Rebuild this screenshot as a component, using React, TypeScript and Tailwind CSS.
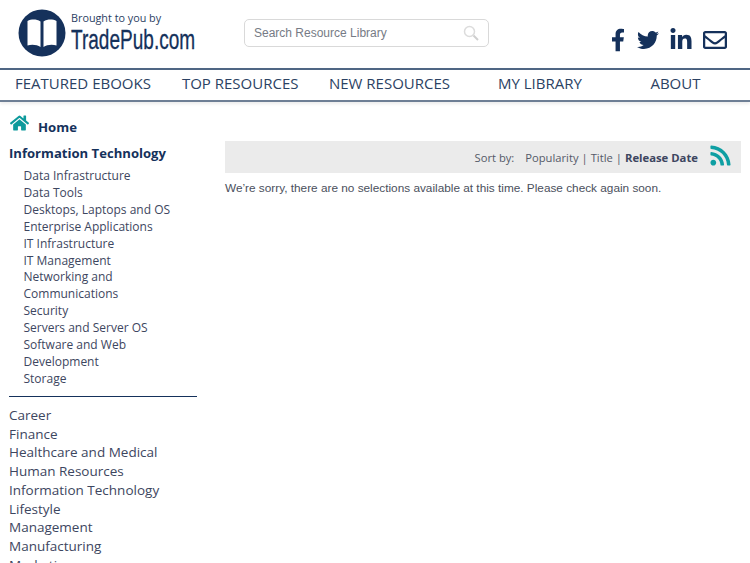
import React from 'react';
import { FaFacebookF, FaTwitter, FaLinkedinIn, FaRegEnvelope, FaHome, FaRss } from 'react-icons/fa';

const subCategories = [
  'Data Infrastructure',
  'Data Tools',
  'Desktops, Laptops and OS',
  'Enterprise Applications',
  'IT Infrastructure',
  'IT Management',
  'Networking and Communications',
  'Security',
  'Servers and Server OS',
  'Software and Web Development',
  'Storage',
];

const categories = [
  'Career',
  'Finance',
  'Healthcare and Medical',
  'Human Resources',
  'Information Technology',
  'Lifestyle',
  'Management',
  'Manufacturing',
  'Marketing',
];

const Logo: React.FC = () => (
  <svg viewBox="0 0 48 48" className="w-[48px] h-[48px] shrink-0">
    <circle cx="24" cy="24" r="23.5" fill="#15315b" />
    <path d="M9.500 12c4-2 9-2 13 .5V38c-3.500-2.500-9-3-13-1.500z" fill="#fff" />
    <path d="M38.500 12c-4-2-9-2-13 .5V38c3.500-2.500 9-3 13-1.500z" fill="#fff" />
  </svg>
);

const App: React.FC = () => {
  return (
    <div className="h-[563px] overflow-hidden bg-white font-['Open_Sans',sans-serif] text-[#3d4660]">
      <header className="h-[68px] flex items-start">
        <div className="ml-[18px] mt-[9px] flex items-center gap-[5px]">
          <Logo />
          <div className="w-[124px] text-[#15315b] mt-[2px]">
            <div className="text-[10.800px] leading-[14px] mt-[-2px] text-[#2c3e63] whitespace-nowrap">Brought to you by</div>
            <div className="font-['Liberation_Sans',sans-serif] text-[28px] leading-[30px] whitespace-nowrap origin-left scale-x-[0.68] [-webkit-text-stroke:0.3px_#15315b]">TradePub.com</div>
          </div>
        </div>
        <div className="ml-[49px] mt-[19px] w-[245px] h-[28px] rounded-[5px] border border-[#d9d9d9] flex items-center justify-between pl-[9px] pr-[9px]">
          <span className="font-['Liberation_Sans',sans-serif] text-[12px] text-[#767b85]">Search Resource Library</span>
          <svg viewBox="0 0 16 16" className="w-[16px] h-[16px]" fill="none">
            <circle cx="6.500" cy="6.500" r="5" stroke="#dcdcdc" strokeWidth="1.500" />
            <path d="M10.500 10.500l4.500 4.500" stroke="#cfcfcf" strokeWidth="2" />
          </svg>
        </div>
        <div className="ml-auto mr-[23px] mt-[28px] flex items-center text-[#15315b]">
          <FaFacebookF className="w-[14px] h-[24px] mr-[12px]" />
          <FaTwitter className="w-[22px] h-[24px] mr-[11px]" />
          <FaLinkedinIn className="w-[22px] h-[24px] mr-[11px]" />
          <FaRegEnvelope className="w-[24px] h-[24px]" />
        </div>
      </header>

      <nav className="h-[34px] pb-[4px] border-t-2 border-b-2 border-t-[#4f6684] border-b-[#6e7f95] shadow-[0_2px_3px_rgba(0,0,0,0.08)] flex items-center text-[15px] text-[#2b4263]">
        <span className="ml-[15px]">FEATURED EBOOKS</span>
        <span className="ml-[31px]">TOP RESOURCES</span>
        <span className="ml-[30.500px]">NEW RESOURCES</span>
        <span className="ml-[48px]">MY LIBRARY</span>
        <span className="ml-[68.500px]">ABOUT</span>
      </nav>

      <div className="flex">
        <aside className="w-[188px] ml-[9px] shrink-0">
          <div className="mt-[13px] flex items-center h-[20px]">
            <FaHome className="ml-[1px] w-[19px] h-[20px] text-[#0e9a9c] mt-[-4px]" />
            <span className="ml-[9px] text-[13.200px] font-bold text-[#15315b] mt-[5px]">Home</span>
          </div>
          <h3 className="mt-[8px] text-[13.100px] leading-[20px] font-bold text-[#15315b]">Information Technology</h3>
          <ul className="mt-[5px] pl-[14.500px] text-[12px] leading-[16.900px]">
            {subCategories.map((item) => (
              <li key={item} className="pr-[10px]">{item}</li>
            ))}
          </ul>
          <div className="mt-[8px] border-t border-[#15315b]" />
          <ul className="mt-[9px] text-[13.500px] leading-[18.750px]">
            {categories.map((item) => (
              <li key={item}>{item}</li>
            ))}
          </ul>
        </aside>

        <main className="ml-[28px] w-[516px] mt-[39px]">
          <div className="h-[32px] bg-[#ebebeb] flex items-center justify-end pr-[9px] text-[11.200px] text-[#555a68]">
            <div className="flex items-center mt-[3px]">
              <span>Sort by:</span>
              <span className="ml-[11px]">Popularity</span>
              <span className="mx-[3px]">|</span>
              <span>Title</span>
              <span className="mx-[3px]">|</span>
              <span className="text-[11.300px] font-bold text-[#3d4660]">Release Date</span>
            </div>
            <FaRss className="ml-[11px] w-[23px] h-[23px] text-[#0e9fa3] mt-[-4px]" />
          </div>
          <p className="mt-[7px] font-['Liberation_Sans',sans-serif] text-[11.800px] leading-[16px] text-[#4a4f5c]">
            We’re sorry, there are no selections available at this time. Please check again soon.
          </p>
        </main>
      </div>
    </div>
  );
};

export default App;
